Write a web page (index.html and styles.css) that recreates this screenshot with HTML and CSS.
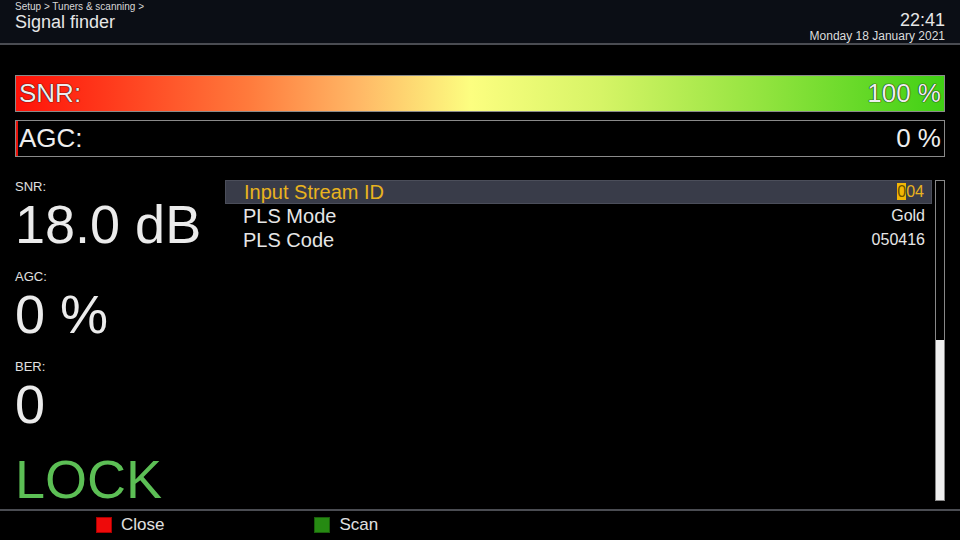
FILE: index.html
```html
<!DOCTYPE html>
<html lang="en">
<head>
    <meta charset="UTF-8">
    <meta name="viewport" content="width=device-width, initial-scale=1.0">
    <title>Signal finder</title>
    <link rel="stylesheet" href="styles.css">
</head>
<body>
    <div class="header">
        <div class="title-box">
            <div class="crumbs">Setup &gt; Tuners &amp; scanning &gt;</div>
            <h1>Signal finder</h1>
        </div>
        <div class="clock">
            <div class="time">22:41</div>
            <div class="date">Monday 18 January 2021</div>
        </div>
    </div>

    <div class="bars">
        <div class="bar">
            <div class="bar-fill snr-fill" style="width: 100%;"></div>
            <span class="bar-label">SNR:</span>
            <span class="bar-value">100 %</span>
        </div>
        <div class="bar">
            <div class="bar-fill agc-fill" style="width: 2px;"></div>
            <span class="bar-label">AGC:</span>
            <span class="bar-value">0 %</span>
        </div>
    </div>

    <div class="content">
        <div class="stats">
            <div class="stat">
                <div class="stat-label">SNR:</div>
                <div class="stat-value">18.0 dB</div>
            </div>
            <div class="stat">
                <div class="stat-label">AGC:</div>
                <div class="stat-value">0 %</div>
            </div>
            <div class="stat">
                <div class="stat-label">BER:</div>
                <div class="stat-value">0</div>
            </div>
            <div class="lock">LOCK</div>
        </div>

        <div class="list">
            <div class="row selected">
                <span class="row-name">Input Stream ID</span>
                <span class="row-value"><span class="cursor">0</span>04</span>
            </div>
            <div class="row">
                <span class="row-name">PLS Mode</span>
                <span class="row-value">Gold</span>
            </div>
            <div class="row">
                <span class="row-name">PLS Code</span>
                <span class="row-value">050416</span>
            </div>
        </div>

        <div class="scrollbar">
            <div class="thumb"></div>
        </div>
    </div>

    <div class="footer">
        <div class="key"><span class="key-red"></span>Close</div>
        <div class="key"><span class="key-green"></span>Scan</div>
    </div>
</body>
</html>
```

FILE: styles.css
```css
body {
    margin: 0;
    width: 960px;
    height: 540px;
    overflow: hidden;
    background-color: #000;
    color: #e6e6e6;
    font-family: "Liberation Sans", Arial, sans-serif;
}
.header {
    height: 43px;
    background-color: #0b0e15;
    border-bottom: 2px solid #4a4c52;
    padding: 0 15px;
    display: flex;
    justify-content: space-between;
}
.crumbs {
    font-size: 10px;
    line-height: 10px;
    padding-top: 2px;
    color: #d8d8d8;
}
.header h1 {
    margin: 0;
    font-size: 18px;
    font-weight: normal;
    line-height: 20px;
    color: #e6e6e6;
}
.clock {
    text-align: right;
    padding-top: 10px;
}
.time {
    font-size: 18px;
    line-height: 20px;
}
.date {
    font-size: 12px;
    line-height: 12px;
    color: #dcdcdc;
}
.bars {
    padding: 30px 15px 0;
    display: flex;
    flex-direction: column;
    gap: 8px;
}
.bar {
    height: 35px;
    border: 1px solid #8a8a8a;
    display: flex;
    justify-content: space-between;
    align-items: center;
    padding: 0 3px;
    position: relative;
    font-size: 26px;
    color: #eee;
    text-shadow: 0 0 1px #000, 0 0 1px #000;
}
.bar-fill {
    position: absolute;
    left: 0;
    top: 0;
    bottom: 0;
}
.snr-fill {
    background: linear-gradient(to right, #ff1208 0%, #ff3a1c 10%, #ff7a3c 25%, #ffb866 37%, #fcfe80 49%, #d6f466 63%, #94e440 80%, #40d014 100%);
}
.agc-fill {
    background-color: #e8140c;
}
.bar-label, .bar-value {
    position: relative;
}
.content {
    display: flex;
    padding: 23px 15px 0;
    height: 321px;
}
.stats {
    width: 210px;
    margin-top: -1px;
}
.stat {
    height: 90px;
}
.stat-label {
    font-size: 13px;
    line-height: 14px;
    color: #e0e0e0;
    padding-top: 1px;
}
.stat-value {
    font-size: 54px;
    line-height: 60px;
    color: #ebebeb;
}
.lock {
    font-size: 54px;
    line-height: 60px;
    color: #5cbf55;
}
.list {
    flex: 1;
    margin-right: 3px;
}
.row {
    height: 24px;
    display: flex;
    justify-content: space-between;
    align-items: center;
    padding: 0 7px 0 18px;
    font-size: 20px;
}
.row-value {
    font-size: 16px;
}
.selected {
    height: 22px;
    background-color: #393c49;
    border: 1px solid #4b4e5a;
    color: #e9b31e;
}
.cursor {
    background-color: #f2b705;
    color: #6b5000;
}
.scrollbar {
    width: 8px;
    border: 1px solid #888;
    display: flex;
    flex-direction: column;
    justify-content: flex-end;
}
.thumb {
    height: 160px;
    background-color: #efefef;
}
.footer {
    margin-top: 8px;
    border-top: 2px solid #4a4c52;
    height: 28px;
    display: flex;
    align-items: center;
    padding-left: 96px;
    gap: 150px;
}
.key {
    display: flex;
    align-items: center;
    font-size: 17px;
    color: #e0e0e0;
}
.key span {
    width: 14px;
    height: 14px;
    margin-right: 9px;
}
.key-red {
    background-color: #ee0a0a;
    border: 1px solid #a00;
}
.key-green {
    background-color: #268a12;
    border: 1px solid #1a5e0c;
}
```
